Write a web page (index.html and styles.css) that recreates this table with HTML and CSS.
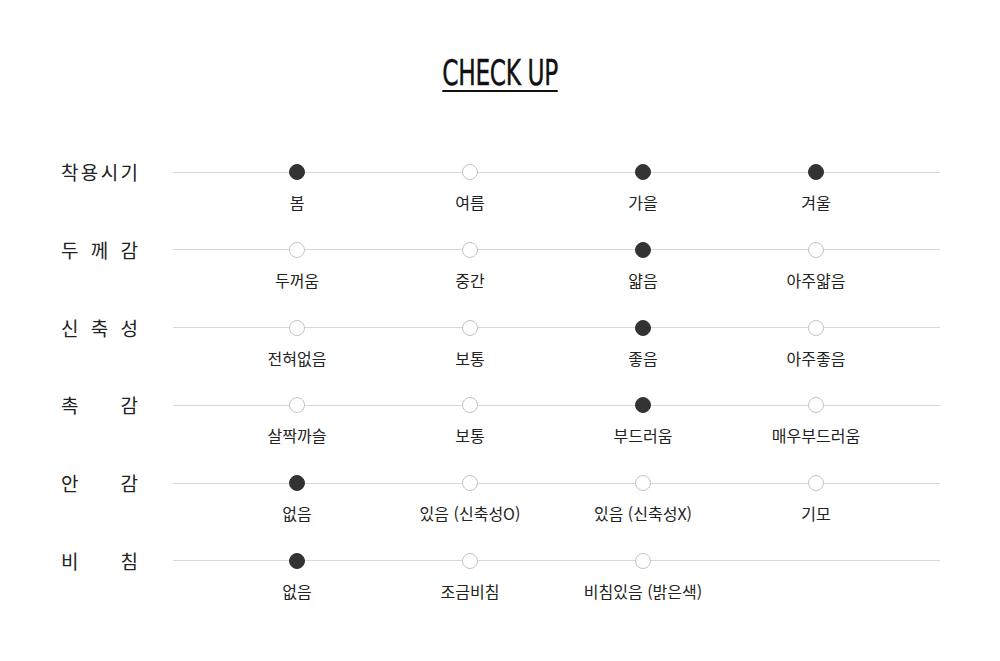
FILE: index.html
```html
<!DOCTYPE html>
<html lang="ko">
<head>
<meta charset="utf-8">
<link rel="stylesheet" href="styles.css">
</head>
<body>
<div class="page">
  <h1 class="title"><span>CHECK UP</span></h1>
  <div class="rows">
    <div class="row">
      <div class="label"><b>착</b><b>용</b><b>시</b><b>기</b></div>
      <div class="track">
        <div class="opt"><i class="dot on"></i><span>봄</span></div>
        <div class="opt"><i class="dot"></i><span>여름</span></div>
        <div class="opt"><i class="dot on"></i><span>가을</span></div>
        <div class="opt"><i class="dot on"></i><span>겨울</span></div>
      </div>
    </div>
    <div class="row">
      <div class="label"><b>두</b><b>께</b><b>감</b></div>
      <div class="track">
        <div class="opt"><i class="dot"></i><span>두꺼움</span></div>
        <div class="opt"><i class="dot"></i><span>중간</span></div>
        <div class="opt"><i class="dot on"></i><span>얇음</span></div>
        <div class="opt"><i class="dot"></i><span>아주얇음</span></div>
      </div>
    </div>
    <div class="row">
      <div class="label"><b>신</b><b>축</b><b>성</b></div>
      <div class="track">
        <div class="opt"><i class="dot"></i><span>전혀없음</span></div>
        <div class="opt"><i class="dot"></i><span>보통</span></div>
        <div class="opt"><i class="dot on"></i><span>좋음</span></div>
        <div class="opt"><i class="dot"></i><span>아주좋음</span></div>
      </div>
    </div>
    <div class="row">
      <div class="label"><b>촉</b><b>감</b></div>
      <div class="track">
        <div class="opt"><i class="dot"></i><span>살짝까슬</span></div>
        <div class="opt"><i class="dot"></i><span>보통</span></div>
        <div class="opt"><i class="dot on"></i><span>부드러움</span></div>
        <div class="opt"><i class="dot"></i><span>매우부드러움</span></div>
      </div>
    </div>
    <div class="row">
      <div class="label"><b>안</b><b>감</b></div>
      <div class="track">
        <div class="opt"><i class="dot on"></i><span>없음</span></div>
        <div class="opt"><i class="dot"></i><span>있음 (신축성O)</span></div>
        <div class="opt"><i class="dot"></i><span>있음 (신축성X)</span></div>
        <div class="opt"><i class="dot"></i><span>기모</span></div>
      </div>
    </div>
    <div class="row">
      <div class="label"><b>비</b><b>침</b></div>
      <div class="track">
        <div class="opt"><i class="dot on"></i><span>없음</span></div>
        <div class="opt"><i class="dot"></i><span>조금비침</span></div>
        <div class="opt"><i class="dot"></i><span>비침있음 (밝은색)</span></div>
        <div class="opt empty"></div>
      </div>
    </div>
  </div>
</div>
</body>
</html>
```

FILE: styles.css
```css
html, body {
  margin: 0;
  padding: 0;
  background: #fff;
}
body {
  font-family: "Noto Sans CJK KR", "Noto Sans", sans-serif;
  color: #222;
}
.page {
  width: 1000px;
  height: 661px;
  box-sizing: border-box;
  padding-top: 56px;
}
.title {
  margin: 0;
  text-align: center;
  font-family: "DejaVu Sans Condensed", "DejaVu Sans", sans-serif;
  font-stretch: condensed;
  font-weight: normal;
  font-size: 35px;
  line-height: 34px;
  height: 36px;
  color: #111;
  letter-spacing: -0.5px;
}
.title span {
  display: inline-block;
  border-bottom: 2px solid #111;
  padding-bottom: 0;
  transform: scaleX(0.74);
  -webkit-text-stroke: 0.4px #111;
}
.rows {
  margin-top: 72px;
  padding-left: 61px;
  display: flex;
  flex-direction: column;
  gap: 28.8px;
}
.row {
  display: flex;
  align-items: flex-start;
  height: 49px;
}
.label {
  width: 77px;
  margin-right: 35px;
  font-size: 19px;
  line-height: 16px;
  height: 16px;
  display: flex;
  justify-content: space-between;
  color: #222;
  white-space: nowrap;
}
.label b {
  font-weight: normal;
}
.track {
  width: 767px;
  display: grid;
  grid-template-columns: repeat(4, 173px);
  padding-left: 37.5px;
  box-sizing: border-box;
  background: linear-gradient(#d8d8d8, #d8d8d8) no-repeat 0 7.5px / 100% 1px;
}
.opt {
  display: flex;
  flex-direction: column;
  align-items: center;
}
.dot {
  display: block;
  width: 16px;
  height: 16px;
  box-sizing: border-box;
  border-radius: 50%;
  background: #fff;
  border: 1px solid #c4c4c4;
}
.dot.on {
  background: #333;
  border-color: #333;
}
.opt span {
  margin-top: 12px;
  font-size: 16px;
  line-height: 20px;
  color: #222;
  white-space: nowrap;
}
```
